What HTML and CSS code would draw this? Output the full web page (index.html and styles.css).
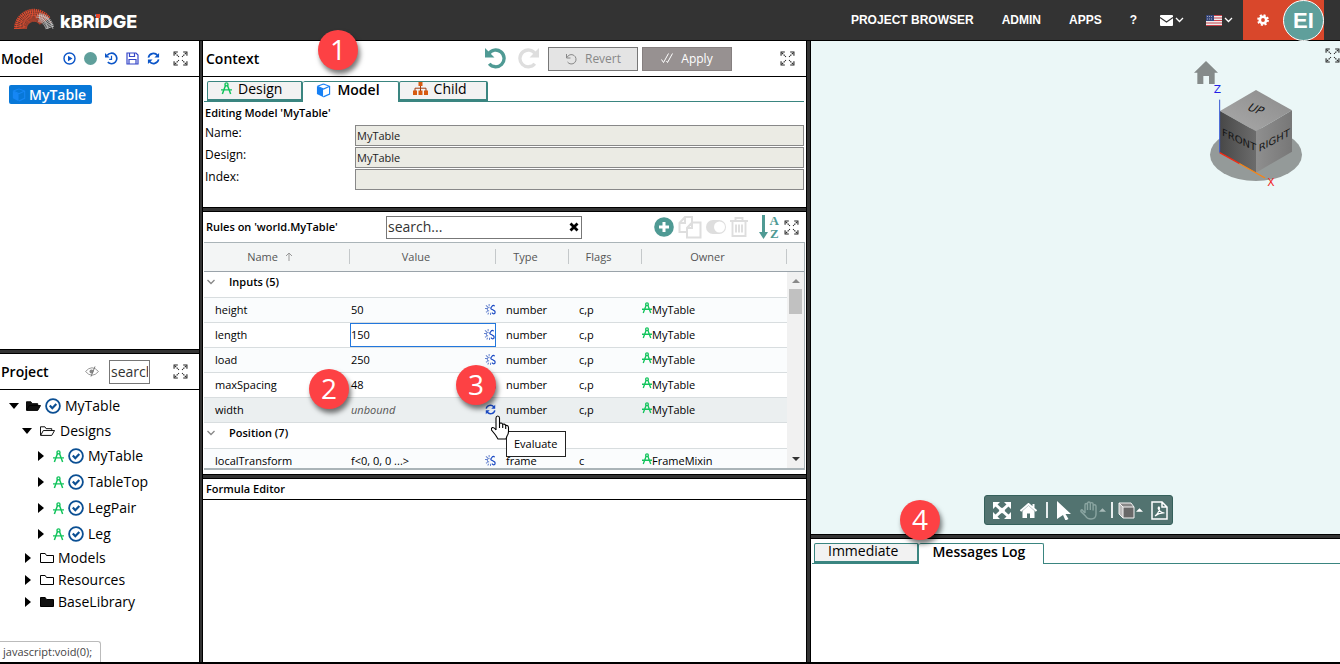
FILE: index.html
```
<!DOCTYPE html>
<html lang="en">
<head>
<meta charset="utf-8">
<title>kBridge</title>
<link rel="stylesheet" href="styles.css">
</head>
<body>
<svg class="defs" aria-hidden="true">
  <symbol id="expand" viewBox="0 0 14 14"><path d="M1 4.500V1h3.500M9.500 1H13v3.500M13 9.500V13H9.500M4.500 13H1V9.500" fill="none" stroke="currentColor" stroke-width="1"/><path d="M2 2l3.500 3.500M12 2L8.500 5.500M12 12L8.500 8.500M2 12l3.500-3.500" stroke="currentColor" stroke-width="1.100" stroke-dasharray="1.300 .7"/></symbol>
  <symbol id="compass" viewBox="0 0 12 14"><path d="M5.200 3L1.500 13M6.800 3l3.700 10M0 8.500h12" fill="none" stroke="currentColor" stroke-width="1.600"/><circle cx="6" cy="2.500" r="1.700" fill="none" stroke="currentColor" stroke-width="1.400"/></symbol>
  <symbol id="cube" viewBox="0 0 16 16"><path d="M1 3.500v8.200L7.500 15V6.500z" fill="currentColor"/><path d="M8 1l6.500 2.500v8.300L7.800 14.800M1.500 3.500L8 1M1.500 3.500L8 6.500l6.500-3" fill="none" stroke="currentColor" stroke-width="1.200"/></symbol>
  <symbol id="sync" viewBox="0 0 14 14"><path d="M1.500 6a5.500 5.500 0 0 1 9.800-2.200M12.500 8a5.500 5.500 0 0 1-9.800 2.200" fill="none" stroke="currentColor" stroke-width="1.800"/><path d="M13 1v5H8zM1 13V8h5z" fill="currentColor"/></symbol>
  <symbol id="undo" viewBox="0 0 20 20"><path d="M3.500 5.500A8 8 0 1 1 4 15" fill="none" stroke="currentColor" stroke-width="3.200"/><path d="M0 0v9h9z" fill="currentColor"/></symbol>
  <symbol id="unlink" viewBox="0 0 12 12"><path d="M10.500 2.500Q9.500 1 8 2L6.500 4Q6 5.500 8 6l2.500 1.500Q11.500 9 10.500 10.500 9 11.500 7.500 9.500" fill="none" stroke="#1c4bc4" stroke-width="1.300"/><path d="M1 1.500l2.200 2M4.500 0v2.500M0 5h2.500M5 4Q2.500 3.500 2.500 6q0 1.500 2 1.500M1 9l2-1M3 11.500l1-2M6 12V9.500" fill="none" stroke="#6683cf" stroke-width="1.100"/></symbol>
  <symbol id="check" viewBox="0 0 16 16"><circle cx="8" cy="8" r="6.900" fill="#fff" stroke="#0b4f93" stroke-width="1.800"/><path d="M4.800 7.500l2.500 2.700L11.300 6" fill="none" stroke="#0b4f93" stroke-width="2.200"/></symbol>
  <symbol id="right" viewBox="0 0 6 10"><path d="M0 0l6 5-6 5z" fill="currentColor"/></symbol>
  <symbol id="down" viewBox="0 0 10 6"><path d="M0 0h10L5 6z" fill="currentColor"/></symbol>
  <symbol id="chev" viewBox="0 0 8 6"><path d="M.5 1L4 4.500 7.500 1" fill="none" stroke="currentColor" stroke-width="1.300"/></symbol>
  <symbol id="folder" viewBox="0 0 14 12"><path d="M.5 10.500v-9h4.700l1.300 2h7v7z" stroke="currentColor"/></symbol>
  <symbol id="folderopen" viewBox="0 0 16 12"><path d="M.5 10.500v-9h4.700l1.300 2h6v2M.7 10.700L3.500 5.500h12l-3 5.200z" stroke="currentColor"/></symbol>
</svg>

<header class="topbar">
  <a class="brand" href="#">
    <svg class="arch" viewBox="0 0 43 24" aria-hidden="true">
      <path d="M7.500 23A13.500 13.500 0 0 1 32 15" fill="none" stroke="#d9472b" stroke-width="13" stroke-dasharray="1 .5"/>
      <path d="M3 22A18 18 0 0 1 38 17M7 22a14 14 0 0 1 26-8M11 22a10 10 0 0 1 15-11" fill="none" stroke="#e2583d" stroke-width=".6"/>
      <path d="M26 11.500q8 1 11 11" fill="none" stroke="#b9b9b9" stroke-width="9" stroke-dasharray=".9 .6"/>
      <path d="M23 11q10 0 12 12M24 9q14 1 16 14" fill="none" stroke="#d8d8d8" stroke-width=".6"/>
    </svg>
    <span class="wordmark">kBR<span class="dot">i</span>DGE</span>
  </a>
  <nav class="nav">
    <a href="#">PROJECT BROWSER</a><a href="#">ADMIN</a><a href="#">APPS</a><a href="#">?</a>
    <a href="#" class="pair" aria-label="Mail"><svg width="13" height="11" viewBox="0 0 13 11"><rect width="13" height="11" rx="1" fill="#fff"/><path d="M0 2.500l6.500 4.500L13 2.500" fill="none" stroke="#333" stroke-width="1.100"/></svg><svg width="9" height="6"><use href="#chev"/></svg></a>
    <a href="#" class="pair flag" aria-label="Language"><svg width="16" height="11" viewBox="0 0 16 11"><rect width="16" height="11" fill="#eee"/><path d="M0 .5h16M0 3h16M0 5.500h16M0 8h16M0 10.500h16" stroke="#c9404a"/><rect width="8" height="6" fill="#36477c"/><path d="M1 1.500h6M1 4h6" stroke="#aab" stroke-dasharray="1 1"/></svg><svg width="9" height="6"><use href="#chev"/></svg></a>
  </nav>
  <div class="account">
    <button class="gear" aria-label="Settings"><svg width="12" height="12" viewBox="0 0 12 12"><circle cx="6" cy="6" r="3.200" fill="none" stroke="#fff" stroke-width="2.600"/><circle cx="6" cy="6" r="4.900" fill="none" stroke="#fff" stroke-width="2" stroke-dasharray="2 1.850"/></svg></button>
    <button class="avatar">EI</button>
  </div>
  <span class="edge"></span>
</header>

<main class="workspace">
  <div class="col left">
    <section class="panel">
      <div class="bar">
        <h2>Model</h2>
        <div class="tools blue">
          <button aria-label="Run"><svg width="13" height="13" viewBox="0 0 13 13"><circle cx="6.500" cy="6.500" r="5.500" fill="none" stroke="currentColor" stroke-width="1.400"/><path d="M5 3.700L9.500 6.500 5 9.300z" fill="currentColor"/></svg></button>
          <span class="status"></span>
          <button aria-label="History"><svg width="13" height="13" viewBox="0 0 14 14"><path d="M2.500 3.500A5.700 5.700 0 1 1 3 11" fill="none" stroke="currentColor" stroke-width="1.800"/><path d="M0 1v5h5z" fill="currentColor"/><path d="M7 4v4H4.500" fill="none" stroke="currentColor" stroke-width="1.300"/></svg></button>
          <button aria-label="Save"><svg width="13" height="13" viewBox="0 0 13 13"><path d="M1 1h9l2 2v9H1zM3.500 1v3.500h5V1M3 12V7.500h7V12" fill="none" stroke="#3546c8" stroke-width="1.200"/></svg></button>
          <button aria-label="Refresh"><svg width="13" height="13"><use href="#sync"/></svg></button>
        </div>
        <button class="expand" aria-label="Expand"><svg><use href="#expand"/></svg></button>
      </div>
      <div class="modeltree"><button class="chip"><svg width="14" height="14"><use href="#cube"/></svg>MyTable</button></div>
    </section>
    <div class="split"></div>
    <section class="panel">
      <div class="bar">
        <h2>Project</h2>
        <div class="tools grey">
          <button aria-label="Toggle hidden"><svg width="14" height="11" viewBox="0 0 14 11"><path d="M.5 5.500Q7-2 13.500 5.500 7 13 .5 5.500z" fill="none" stroke="#999"/><circle cx="6.500" cy="5.500" r="2" fill="#888"/><path d="M10 .5L6 10.500" stroke="#777"/></svg></button>
          <input class="find" type="text" placeholder="search" aria-label="Search project">
        </div>
        <button class="expand" aria-label="Expand"><svg><use href="#expand"/></svg></button>
      </div>
      <ul class="tree">
        <li class="l0"><svg class="dn"><use href="#down"/></svg><svg class="fo dark"><use href="#folderopen"/></svg><svg class="ck"><use href="#check"/></svg>MyTable</li>
        <li class="l1"><svg class="dn"><use href="#down"/></svg><svg class="fo"><use href="#folderopen"/></svg>Designs</li>
        <li class="l2"><svg class="rt"><use href="#right"/></svg><svg class="cp"><use href="#compass"/></svg><svg class="ck"><use href="#check"/></svg>MyTable</li>
        <li class="l2"><svg class="rt"><use href="#right"/></svg><svg class="cp"><use href="#compass"/></svg><svg class="ck"><use href="#check"/></svg>TableTop</li>
        <li class="l2"><svg class="rt"><use href="#right"/></svg><svg class="cp"><use href="#compass"/></svg><svg class="ck"><use href="#check"/></svg>LegPair</li>
        <li class="l2"><svg class="rt"><use href="#right"/></svg><svg class="cp"><use href="#compass"/></svg><svg class="ck"><use href="#check"/></svg>Leg</li>
        <li class="l3"><svg class="rt"><use href="#right"/></svg><svg class="fd"><use href="#folder"/></svg>Models</li>
        <li class="l3"><svg class="rt"><use href="#right"/></svg><svg class="fd"><use href="#folder"/></svg>Resources</li>
        <li class="l3"><svg class="rt"><use href="#right"/></svg><svg class="fd dark"><use href="#folder"/></svg>BaseLibrary</li>
      </ul>
      <div class="linkstatus">javascript:void(0);</div>
    </section>
  </div>
  <div class="vsplit"></div>

  <div class="col middle">
    <section class="panel open">
      <div class="bar">
        <h2>Context</h2>
        <div class="actions">
          <button class="bare teal" aria-label="Undo"><svg width="21" height="21"><use href="#undo"/></svg></button>
          <button class="bare pale" aria-label="Redo"><svg class="flip" width="21" height="21"><use href="#undo"/></svg></button>
          <button class="btn revert"><svg width="12" height="12" viewBox="0 0 12 12"><path d="M1.500 1v4h4M2 4.500a4.700 4.700 0 1 1 .5 4.500" fill="none" stroke="currentColor" stroke-width="1"/></svg>Revert</button>
          <button class="btn apply"><svg width="12" height="11" viewBox="0 0 12 11"><path d="M.5 6.500l2 3 5-9M5.500 8l1 1.500 5-9" fill="none" stroke="currentColor" stroke-width="1"/></svg>Apply</button>
        </div>
        <button class="expand" aria-label="Expand"><svg><use href="#expand"/></svg></button>
      </div>
      <div class="tabs">
        <button class="tab"><svg class="cp" width="12" height="13"><use href="#compass"/></svg>Design</button>
        <button class="tab active"><svg class="cb" width="15" height="15"><use href="#cube"/></svg>Model</button>
        <button class="tab"><svg width="15" height="13" viewBox="0 0 15 13"><path d="M5.500 0h4v4h-4zM0 8.500h4V13H0zM5.500 8.500h4V13h-4zM11 8.500h4V13h-4z" fill="#d75a10"/><path d="M7.500 4v5M2 9V6.200h11V9" fill="none" stroke="#a33c10"/></svg>Child</button>
      </div>
      <form class="form">
        <h3>Editing Model 'MyTable'</h3>
        <div class="field"><label for="n">Name:</label><input id="n" type="text" value="MyTable" readonly></div>
        <div class="field"><label for="d">Design:</label><input id="d" type="text" value="MyTable" readonly></div>
        <div class="field"><label for="i">Index:</label><input id="i" type="text" value="" readonly></div>
      </form>
      <span class="step s1">1</span>
    </section>
    <div class="split"></div>
    <section class="panel open rules">
      <div class="rulesbar">
        <h3>Rules on 'world.MyTable'</h3>
        <div class="search"><input type="text" placeholder="search..." aria-label="Search rules"><button aria-label="Clear"><svg width="10" height="10" viewBox="0 0 10 10"><path d="M1.500 1.500l7 7M8.500 1.500l-7 7" stroke="#000" stroke-width="2.800"/></svg></button></div>
        <div class="ruletools">
          <button aria-label="Add"><svg width="20" height="20" viewBox="0 0 20 20"><circle cx="10" cy="10" r="9.800" fill="#4f9a94"/><path d="M10 5v10M5 10h10" stroke="#fff" stroke-width="3"/></svg></button>
          <button aria-label="Copy"><svg width="24" height="24" viewBox="0 0 24 24"><path d="M9 17H1.500V8L7 2h7v6M7 2v6H1.500M9 22.500V13l5-5.500h8.500v15zM14 7.500V13H9" fill="none" stroke="#dedede" stroke-width="2"/></svg></button>
          <button aria-label="Toggle"><svg width="20" height="14" viewBox="0 0 20 14"><rect width="20" height="14" rx="7" fill="#dedede"/><circle cx="13.500" cy="7" r="5.500" fill="#fff"/></svg></button>
          <button aria-label="Delete"><svg width="18" height="20" viewBox="0 0 18 20"><path d="M0 4h18M5.500 4V1h7v3M2.500 4v15h13V4M6 7.500v8M9 7.500v8M12 7.500v8" fill="none" stroke="#dedede" stroke-width="1.900"/></svg></button>
          <button class="sort" aria-label="Sort"><svg width="9" height="24" viewBox="0 0 9 24"><path d="M4.500 0v18" stroke="#4f9a94" stroke-width="3"/><path d="M0 17h9l-4.500 7z" fill="#4f9a94"/></svg><span><b>A</b><b>Z</b></span></button>
          <button class="expand" aria-label="Expand"><svg><use href="#expand"/></svg></button>
        </div>
      </div>
      <div class="grid">
        <table>
          <colgroup><col class="c1"><col class="c2"><col class="c3"><col class="c4"><col class="c5"><col class="c6"></colgroup>
          <thead><tr><th>Name <svg width="8" height="9" viewBox="0 0 8 9"><path d="M4 9V1M1 4l3-3 3 3" fill="none" stroke="#999"/></svg></th><th>Value</th><th>Type</th><th>Flags</th><th>Owner</th><th></th></tr></thead>
          <tbody>
            <tr class="group"><td colspan="6"><svg width="8" height="6"><use href="#chev"/></svg>Inputs (5)</td></tr>
            <tr class="alt"><td>height</td><td><div class="val">50<svg><use href="#unlink"/></svg></div></td><td>number</td><td>c,p</td><td><div class="owner"><svg class="cp"><use href="#compass"/></svg>MyTable</div></td><td></td></tr>
            <tr><td>length</td><td><div class="val edit"><input type="text" value="150" aria-label="length value"><svg><use href="#unlink"/></svg></div></td><td>number</td><td>c,p</td><td><div class="owner"><svg class="cp"><use href="#compass"/></svg>MyTable</div></td><td></td></tr>
            <tr class="alt"><td>load</td><td><div class="val">250<svg><use href="#unlink"/></svg></div></td><td>number</td><td>c,p</td><td><div class="owner"><svg class="cp"><use href="#compass"/></svg>MyTable</div></td><td></td></tr>
            <tr><td>maxSpacing</td><td><div class="val">48<svg><use href="#unlink"/></svg></div></td><td>number</td><td>c,p</td><td><div class="owner"><svg class="cp"><use href="#compass"/></svg>MyTable</div></td><td></td></tr>
            <tr class="hover"><td>width</td><td><div class="val"><i>unbound</i><svg class="eval"><use href="#sync"/></svg></div></td><td>number</td><td>c,p</td><td><div class="owner"><svg class="cp"><use href="#compass"/></svg>MyTable</div></td><td></td></tr>
            <tr class="group"><td colspan="6"><svg width="8" height="6"><use href="#chev"/></svg>Position (7)</td></tr>
            <tr class="alt"><td>localTransform</td><td><div class="val">f&lt;0, 0, 0 ...&gt;<svg><use href="#unlink"/></svg></div></td><td>frame</td><td>c</td><td><div class="owner"><svg class="cp"><use href="#compass"/></svg>FrameMixin</div></td><td></td></tr>
          </tbody>
        </table>
        <div class="scroll"><svg width="8" height="4" viewBox="0 0 8 4"><path d="M0 4l4-4 4 4z" fill="#888"/></svg><span class="thumb"></span><svg width="8" height="4" viewBox="0 0 8 4"><path d="M0 0l4 4 4-4z" fill="#333"/></svg></div>
      </div>
      <span class="step s2">2</span>
      <span class="step s3">3</span>
      <div class="tip">Evaluate</div>
      <svg class="cursor" width="20" height="25" viewBox="0 0 20 25"><path d="M6 15V3q0-2 1.700-2T9.500 3v6q.3-1.200 1.700-1t1.500 1.800q.3-1 1.600-.7t1.400 1.700q.4-.7 1.500-.3t1.300 2v4q0 2.500-1.500 4.500l-1 3H8L5.500 20 1.500 15Q1 13 2.500 12.500T6 15M9.500 9v4M12.700 9.500V13M15.700 11v3" fill="#fff" stroke="#000" stroke-width="1.100"/></svg>
    </section>
    <div class="split"></div>
    <section class="panel"><h3 class="formula">Formula Editor</h3></section>
  </div>
  <div class="vsplit"></div>

  <div class="col right">
    <section class="panel open viewer">
      <button class="expand" aria-label="Expand"><svg><use href="#expand"/></svg></button>
      <svg class="navcube" viewBox="30 50 351 399">
        <defs><linearGradient id="gt" x1="0" y1="1" x2="1" y2="0"><stop offset="0" stop-color="#aaa"/><stop offset="1" stop-color="#8b8b8b"/></linearGradient><linearGradient id="gf"><stop offset="0" stop-color="#484848"/><stop offset="1" stop-color="#6c6c6c"/></linearGradient><linearGradient id="gr"><stop offset="0" stop-color="#8f8f8f"/><stop offset="1" stop-color="#777"/></linearGradient></defs>
        <path d="M78 62l36 35h-10v34H87v-24H70v24H52V97H42z" fill="#858b8a"/>
        <ellipse cx="228" cy="343" rx="138" ry="79" fill="#949a99"/>
        <path d="M228 149l108 61-108 63-108-61z" fill="url(#gt)"/><path d="M120 212l108 61v124l-108-60z" fill="url(#gf)"/><path d="M228 273l108-63v124l-108 63z" fill="url(#gr)"/>
        <path d="M119 178v159" stroke="#3355d0" stroke-width="3"/><path d="M119 337l60 33" stroke="#f22a14" stroke-width="4"/><path d="M178 369.500l77 43.500" stroke="#fb8410" stroke-width="4"/>
        <text transform="translate(199 208) rotate(20) skewX(-20)" class="face">UP</text>
        <text transform="translate(126 285) skewY(25)" class="face f2">FRONT</text>
        <text transform="translate(236 335) skewY(-28)" class="face f2">RIGHT</text>
        <text x="101" y="158" class="axis z">Z</text><text x="262" y="438" class="axis x">X</text>
      </svg>
      <div class="viewbar">
        <button aria-label="Fit"><svg width="18" height="17" viewBox="0 0 18 17"><path d="M3 3l12 11M15 3L3 14" stroke="#fff" stroke-width="3"/><path d="M0 0h7L0 7zM18 0v7l-7-7zM0 17v-7l7 7zM18 17h-7l7-7z" fill="#fff"/><path d="M9 5.500l3 3-3 3-3-3z" fill="#fff"/></svg></button>
        <button aria-label="Home"><svg width="17" height="15" viewBox="0 0 17 15"><path d="M8.500 2.500l6 5.500v7h-4.500v-4.500H7V15H2.500V8z" fill="#fff"/><path d="M.5 8l8-7 8 7M13.500 1v4" fill="none" stroke="#fff" stroke-width="2"/></svg></button>
        <span class="sep"></span>
        <button class="arrow" aria-label="Select"><svg width="14" height="19" viewBox="0 0 14 19"><path d="M0 0l14 13H8.500l3 5-3 1.500L6 14l-6 4z" fill="#fff"/></svg></button>
        <button class="pair hand" aria-label="Pan"><svg width="18" height="19" viewBox="0 0 18 19"><path d="M5 12V4q0-1.500 1.200-1.500T7.500 4v5V2.500Q7.500 1 8.900 1t1.400 1.500V9 3q0-1.400 1.400-1.400T13.100 3v6.500V5q0-1.200 1.400-1.200T16 5v8q0 5-5 5-4 0-5.500-3L1 10.500Q.5 9 2 8.800L5 12" fill="none" stroke="#8aa5a1" stroke-width="1.400"/></svg><svg width="7" height="4" viewBox="0 0 8 4"><path d="M0 4l4-4 4 4z" fill="#a9bbb9"/></svg></button>
        <span class="sep"></span>
        <button class="pair" aria-label="Shading"><svg width="17" height="17" viewBox="0 0 17 17"><path d="M1 1l4 4v11l-4-4z" fill="#bbb"/><path d="M1 1h12l3 4H5z" fill="#888"/><path d="M5 5h11v11H5z" fill="#686868"/><path d="M1 1h12l3 4v11H5l-4-4zM5 16V5h11M1 1l4 4" fill="none" stroke="#f3f3f3"/></svg><svg width="7" height="4" viewBox="0 0 8 4"><path d="M0 4l4-4 4 4z" fill="#fff"/></svg></button>
        <button aria-label="PDF"><svg width="17" height="19" viewBox="0 0 17 19"><path d="M1 1h10l5 5v12H1zM11 1v5h5" fill="none" stroke="#fff" stroke-width="1.500"/><path d="M4 15q4-3 4.500-8Q8 4.500 7.200 7q1 4.500 6.300 5-5-.5-9.500 3" fill="none" stroke="#fff" stroke-width="1.200"/></svg></button>
      </div>
    </section>
    <div class="split"></div>
    <section class="panel open">
      <div class="tabs logs"><button class="tab">Immediate</button><button class="tab active">Messages Log</button></div>
      <span class="step s4">4</span>
    </section>
  </div>
</main>
</body>
</html>
```
FILE: styles.css
```
* { box-sizing: border-box; }
body { margin: 0; height: 100vh; display: flex; flex-direction: column; background: #333; color: #000; font: 14px/20px "Open Sans", sans-serif; border-bottom: 2px solid #000; }
h2, h3, ul { margin: 0; padding: 0; }
h2 { font-size: 14px; font-weight: 600; }
h3 { font-size: 11px; font-weight: 600; line-height: 16px; }
button { font: inherit; color: inherit; background: none; border: 0; padding: 0; margin: 0; display: flex; align-items: center; }
input { font: inherit; color: #222; border-radius: 0; outline: 0; margin: 0; min-width: 0; }
input::placeholder { color: #333; opacity: 1; }
svg { display: block; flex: none; }
.defs { position: absolute; width: 0; height: 0; }

.topbar { height: 41px; flex: none; display: flex; align-items: stretch; background: #333; border-bottom: 1px solid #000; color: #fff; }
.brand { display: flex; align-items: center; gap: 4px; padding-left: 13px; color: #fff; text-decoration: none; }
.arch { width: 43px; height: 24px; margin-bottom: 4px; }
.wordmark { font: 800 18px/20px Inter, sans-serif; padding-top: 4px; }
.dot { position: relative; }
.dot::before { content: ""; position: absolute; left: 1px; top: 3px; width: 4px; height: 4px; background: #e0472a; }
.nav { margin-left: auto; display: flex; align-items: center; gap: 28px; margin-right: 10px; font: bold 12px/16px "Liberation Sans", sans-serif; }
.nav a { color: #fff; text-decoration: none; }
.pair { display: flex; align-items: center; gap: 2px; }
.nav .pair { margin-left: -5px; }
.nav .flag { margin-left: -6px; }
.account { display: flex; background: #d9472b; width: 81px; }
.gear { width: 40px; justify-content: center; }
.avatar { width: 41px; height: 41px; border-radius: 50%; background: #5f9f9b; border: 1px solid #fff; color: #fff; font: bold 22px/24px "Liberation Sans", sans-serif; justify-content: center; }
.edge { width: 16px; }

.workspace { flex: 1; min-height: 0; display: grid; grid-template-columns: 199fr 4px 603fr 5px 529fr; }
.col { display: grid; min-width: 0; min-height: 0; }
.left { grid-template-rows: 308fr 5px 308fr; }
.middle { grid-template-rows: auto 5px 263fr 5px 183fr; }
.right { grid-template-rows: 493fr 5px 123fr; }
.panel { background: #fff; min-width: 0; min-height: 0; overflow: hidden; position: relative; }
.open { overflow: visible; }
.split { background: #333; border-top: 1px solid #000; border-bottom: 1px solid #000; }
.vsplit { background: #333; border-left: 1px solid #000; border-right: 1px solid #000; }
.bar { height: 36px; display: flex; align-items: center; border-bottom: 1px solid #000; padding: 0 11px 0 1px; }
.expand { color: #222; }
.expand svg { width: 15px; height: 15px; }
.tools { display: flex; align-items: center; margin-left: auto; margin-right: 13px; }
.blue { gap: 8px; color: #0b55c8; }
.status { width: 13px; height: 13px; border-radius: 50%; background: #5f9f9b; }
.grey { gap: 10px; margin-right: 23px; }
.find { width: 41px; height: 24px; padding: 0 1px; border: 1px solid #777; }
.modeltree { padding: 8px 9px; }
.chip { height: 19px; padding: 0 6px 0 3px; gap: 3px; border-radius: 2px; background: #0878d8; color: #fff; font-weight: 600; font-size: 14px; }
.chip svg { color: #1687f5; }

.tree { list-style: none; padding-top: 3px; }
.tree li { display: flex; align-items: center; height: 25px; gap: 4px; }
.tree .dark { fill: #111; }
.tree svg { fill: none; }
.tree .l0 { padding-left: 9px; }
.tree .l1 { padding-left: 22px; gap: 5px; }
.tree .l2 { height: 26px; padding-left: 38px; }
.tree .l3 { height: 22px; padding-left: 25px; }
.dn { width: 10px; height: 6px; margin-right: 3px; }
.rt { width: 6px; height: 10px; margin-right: 5px; }
.fo { width: 15px; height: 12px; }
.fd { width: 14px; height: 12px; }
.ck { width: 16px; height: 16px; }
.cp { color: #12c45c; width: 11px; height: 13px; }
.linkstatus { position: absolute; left: 0; bottom: 0; border: 1px solid #bbb; border-left: 0; border-bottom: 0; border-top-right-radius: 3px; padding: 0 8px 0 3px; background: #fff; color: #444; font-size: 11px; }

.middle .bar { padding: 0 11px 0 3px; }
.actions { margin-left: auto; margin-right: 48px; display: flex; align-items: center; gap: 4px; }
.teal { color: #4f9a94; margin-right: 8px; }
.pale { color: #dedede; margin-right: 5px; }
.flip { transform: scaleX(-1); }
.btn { width: 90px; height: 24px; border: 1px solid #777; justify-content: center; gap: 8px; font-size: 12px; }
.revert { background: #e4e4e4; color: #888; }
.apply { background: #979191; border-color: #857f7f; color: #fff; }
.tabs { display: flex; height: 25px; padding: 4px 0 0 3px; margin: 0 2px 0 1px; border-bottom: 1px solid #3a8580; font-size: 14px; }
.tab { height: 20px; padding: 0 19px 4px 13px; gap: 6px; background: #f2f2f2; border: 1px solid #3a8580; border-bottom-width: 2px; border-right-width: 2px; border-radius: 2px 2px 0 0; line-height: 16px; }
.tabs .active { height: 21px; padding-right: 18px; background: #fff; border-bottom: 0; border-left: 0; border-right-width: 1px; font-weight: 600; }
.tab .cb { color: #1680f5; }
.form { padding: 3px 2px 17px 2px; font-size: 11px; }
.field { display: flex; height: 22px; }
.field label { width: 150px; line-height: 18px; font-size: 12px; }
.form h3 { height: 19px; line-height: 16px; }
.field input { flex: 1; height: 21px; padding: 0 1px; margin-top: 1px; border: 1px solid #888; background: #ebebe4; }

.rules { display: flex; flex-direction: column; padding: 0 1px 4px 1px; }
.rulesbar { height: 30px; flex: none; display: flex; align-items: center; padding: 0 6px 0 2px; }
.rulesbar h3 { width: 180px; }
.search { display: flex; width: 196px; height: 23px; border: 1px solid #777; padding-right: 2px; }
.search input { flex: 1; border: 0; padding: 0 1px; }
.ruletools { display: flex; align-items: center; gap: 5px; margin-left: auto; }
.ruletools button + button:nth-child(-n+4) { margin-left: -1px; }
.sort { margin-left: 6px; gap: 2px; color: #4f9a94; }
.sort span { display: flex; flex-direction: column; font: bold 13px/13px "Liberation Serif", serif; }
.grid { flex: 1; min-height: 0; overflow: hidden; position: relative; border: 1px solid #aab4b8; border-left: 0; border-bottom-width: 2px; }
table { width: 100%; border-collapse: collapse; table-layout: fixed; font-size: 11px; line-height: 16px; }
.c1 { width: 146px; } .c2 { width: 146px; } .c3 { width: 73px; } .c4 { width: 73px; } .c6 { width: 17px; }
th { height: 28px; padding: 0 14px 0 0; background: #f3f5f5; color: #555; font-weight: 400; text-align: center; position: relative; border-bottom: 1px solid #9aa3aa; }
th svg { display: inline-block; margin-left: 4px; }
th:not(:last-child)::after { content: ""; position: absolute; right: 0; top: 6px; height: 15px; border-right: 1px solid #c4c8ca; }
td { height: 25px; padding: 0 10px; border-bottom: 1px solid #d8dddf; white-space: nowrap; }
td:first-child { padding-left: 11px; }
td:nth-child(2) { padding: 0; }
td:nth-child(5) { padding: 0; }
.owner { display: flex; align-items: center; }
.owner .cp { width: 10px; height: 14px; margin-bottom: 4px; }
.group td { height: 26px; padding: 0 0 4px 3px; font-weight: 600; }
.group td svg { display: inline-block; color: #888; margin-right: 14px; vertical-align: 1px; }
.alt { background: #fafcfd; }
.hover { background: #ebeff0; }
.val { display: flex; align-items: center; justify-content: space-between; height: 24px; padding: 0 0 0 1px; }
.val svg { width: 11px; height: 11px; }
.val i { color: #555; }
.val .eval { color: #1c4bc4; }
.edit { border: 1px solid #2277dd; padding: 0; background: #fff; }
.edit input { width: 100px; border: 0; padding: 0; color: #000; }
.scroll { position: absolute; right: 0; top: 29px; bottom: 0; width: 17px; background: #f1f1f1; display: flex; flex-direction: column; align-items: center; padding: 7px 0; }
.thumb { width: 13px; height: 25px; margin-top: 6px; margin-bottom: auto; background: #c1c1c1; }
.formula { height: 21px; padding-left: 3px; line-height: 20px; border-bottom: 1px solid #000; }

.step { position: absolute; z-index: 3; width: 40px; height: 40px; border-radius: 50%; background: #fd4144; color: #fff; font-size: 28px; font-weight: 500; line-height: 39px; text-align: center; box-shadow: 2px 4px 5px #0008; }
.s1 { left: 115px; top: -11px; }
.s2 { left: 106px; top: 157px; }
.s3 { left: 253px; top: 153px; }
.s4 { left: 89px; top: -39px; }
.tip { position: absolute; z-index: 3; left: 303px; top: 219px; border: 1px solid #222; background: #fff; padding: 2px 8px 2px 7px; font-size: 11px; }
.cursor { position: absolute; z-index: 4; left: 287px; top: 203px; }

.viewer { background: #ebf7f7; }
.viewer > .expand { position: absolute; right: 0; top: 7px; }
.navcube { position: absolute; right: 33px; top: 16px; width: 117px; height: 133px; }
.face { font: 34px "DejaVu Sans", sans-serif; fill: #161616; }
.f2 { font-size: 30px; }
.axis { font: 32px "DejaVu Sans", sans-serif; }
.z { fill: #2020e8; }
.x { fill: #f02020; }
.viewbar { position: absolute; left: 173px; bottom: 9px; height: 30px; display: flex; align-items: center; gap: 9px; padding: 0 4px 0 8px; background: #527370; border: 1px solid #35605b; border-radius: 3px; }
.sep { width: 2px; height: 16px; background: #e8eeee; }
.viewbar .hand { margin-right: -4px; }
.viewbar .pair { gap: 1px; }
.viewbar .sep + .pair { margin-left: -4px; margin-right: -1px; }
.logs { padding-left: 2px; margin-right: 0; }
.logs .tab { padding-left: 13px; }
```
